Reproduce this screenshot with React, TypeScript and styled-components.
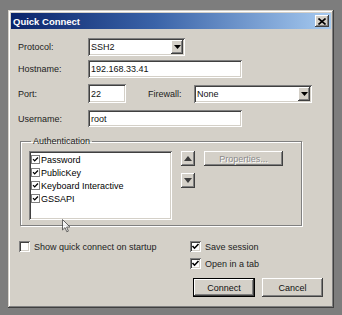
import React from "react";
import styled, { createGlobalStyle } from "styled-components";

const GlobalStyle = createGlobalStyle`
  html, body {
    margin: 0;
    padding: 0;
    background: #7d7d7d;
  }

  body {
    font-family: "Liberation Sans", Arial, sans-serif;
    font-size: 9px;
    color: #000;
  }
`;

const raised = `
  background: #d4d0c8;
  box-shadow: inset -1px -1px #404040, inset 1px 1px #fff, inset -2px -2px #808080;
`;

const sunken = `
  background: #fff;
  box-shadow: inset 1px 1px #808080, inset -1px -1px #fff, inset 2px 2px #404040, inset -2px -2px #d4d0c8;
`;

const CheckMark = ({ size = 11 }: { size?: number }) => (
  <svg width={size} height={size} viewBox="0 0 11 11">
    <polyline points="2.5,5 4.5,7.2 8.5,3" fill="none" stroke="#000" strokeWidth="1.6" />
  </svg>
);

const Triangle = ({ up }: { up?: boolean }) => (
  <svg width="8" height="5" viewBox="0 0 8 5">
    <polygon points={up ? "0,5 8,5 4,0" : "0,0 8,0 4,5"} fill="#3c3c3c" />
  </svg>
);

function Select({ value, width }: { value: string; width: number }) {
  return (
    <SelectBox $w={width}>
      <FieldText>{value}</FieldText>
      <DropButton>
        <svg width="7" height="4" viewBox="0 0 7 4">
          <polygon points="0,0 7,0 3.5,4" fill="#000" />
        </svg>
      </DropButton>
    </SelectBox>
  );
}

function Check({ label, checked }: { label: string; checked?: boolean }) {
  return (
    <CheckRow>
      <CheckBox>{checked ? <CheckMark /> : null}</CheckBox>
      <span>{label}</span>
    </CheckRow>
  );
}

const authMethods = ["Password", "PublicKey", "Keyboard Interactive", "GSSAPI"];

export default function App() {
  return (
    <>
      <GlobalStyle />
      <Window>
        <TitleBar>
          <span>Quick Connect</span>
          <CloseButton>
            <svg width="8" height="7" viewBox="0 0 8 7">
              <path d="M0.5 0.5 L7.5 6.5 M7.5 0.5 L0.5 6.5" stroke="#000" strokeWidth="1.6" />
            </svg>
          </CloseButton>
        </TitleBar>

        <Body>
          <FieldRow $mt={9}>
            <Label>Protocol:</Label>
            <Select value="SSH2" width={97} />
          </FieldRow>

          <FieldRow $mt={4}>
            <Label>Hostname:</Label>
            <TextField $w={154}>
              <FieldText>192.168.33.41</FieldText>
            </TextField>
          </FieldRow>

          <FieldRow $mt={6} $h={19}>
            <Label>Port:</Label>
            <TextField $w={38}>
              <FieldText>22</FieldText>
            </TextField>
            <Label $w={46} $ml={22}>
              Firewall:
            </Label>
            <Select value="None" width={118} />
          </FieldRow>

          <FieldRow $mt={7} $h={17}>
            <Label>Username:</Label>
            <TextField $w={154}>
              <FieldText>root</FieldText>
            </TextField>
          </FieldRow>

          <Group>
            <Legend>Authentication</Legend>
            <GroupInner>
              <ListBox>
                {authMethods.map(m => (
                  <ListItem key={m}>
                    <SmallCheck>
                      <CheckMark size={9} />
                    </SmallCheck>
                    <span>{m}</span>
                  </ListItem>
                ))}
              </ListBox>
              <ArrowColumn>
                <ArrowButton>
                  <Triangle up />
                </ArrowButton>
                <ArrowButton>
                  <Triangle />
                </ArrowButton>
              </ArrowColumn>
              <PropertiesButton>Properties...</PropertiesButton>
            </GroupInner>
          </Group>

          <Bottom>
            <LeftOptions>
              <Check label="Show quick connect on startup" />
            </LeftOptions>
            <RightOptions>
              <Check label="Save session" checked />
              <Check label="Open in a tab" checked />
              <ButtonRow>
                <DefaultButton>Connect</DefaultButton>
                <Button>Cancel</Button>
              </ButtonRow>
            </RightOptions>
          </Bottom>
        </Body>

        <Cursor>
          <svg width="9" height="14" viewBox="0 0 9 14">
            <path
              d="M0.5 0.5 L0.5 11 L3 8.6 L4.8 12.8 L6.4 12.1 L4.6 8 L8 8 Z"
              fill="#fff"
              stroke="#4a4a4a"
              strokeWidth="1"
            />
          </svg>
        </Cursor>
      </Window>
    </>
  );
}

const Window = styled.div`
  position: relative;
  box-sizing: border-box;
  margin: 10px 0 0 8px;
  width: 326px;
  height: 298px;
  padding: 3px;
  display: flex;
  flex-direction: column;
  background: #d4d0c8;
  box-shadow: inset -1px -1px #404040, inset 1px 1px #d4d0c8, inset -2px -2px #808080,
    inset 2px 2px #fff;
`;

const TitleBar = styled.div`
  height: 16px;
  display: flex;
  align-items: center;
  justify-content: space-between;
  padding-left: 2px;
  background: linear-gradient(to right, #0a246a 0%, #3a63a8 45%, #a6caf0 100%);
  color: #fff;
  font-weight: bold;
  font-size: 9.5px;
`;

const CloseButton = styled.div`
  ${raised}
  box-sizing: border-box;
  width: 14px;
  height: 12px;
  margin-right: 2px;
  display: flex;
  align-items: center;
  justify-content: center;
`;

const Body = styled.div`
  display: flex;
  flex-direction: column;
  padding: 0 8px 0 7px;
`;

const FieldRow = styled.div<{ $mt: number; $h?: number }>`
  display: flex;
  align-items: center;
  height: ${p => p.$h ?? 18}px;
  margin-top: ${p => p.$mt}px;
`;

const Label = styled.div<{ $w?: number; $ml?: number }>`
  width: ${p => p.$w ?? 70}px;
  margin-left: ${p => p.$ml ?? 0}px;
  flex-shrink: 0;
  color: #222;
`;

const TextField = styled.div<{ $w: number }>`
  ${sunken}
  box-sizing: border-box;
  width: ${p => p.$w}px;
  height: 100%;
  display: flex;
  align-items: center;
  padding-left: 3px;
`;

const SelectBox = styled.div<{ $w: number }>`
  ${sunken}
  box-sizing: border-box;
  width: ${p => p.$w}px;
  height: 18px;
  display: flex;
  align-items: center;
  justify-content: space-between;
  padding: 2px 2px 2px 3px;
`;

const FieldText = styled.span`
  color: #111;
  white-space: nowrap;
`;

const DropButton = styled.div`
  ${raised}
  box-sizing: border-box;
  width: 12px;
  height: 14px;
  display: flex;
  align-items: center;
  justify-content: center;
`;

const Group = styled.fieldset`
  box-sizing: border-box;
  margin: 9px 0 0 2px;
  width: 282px;
  min-width: 0;
  padding: 5px 8px 5px 8px;
  border: 1px solid #808080;
  box-shadow: inset 1px 1px #fff, 1px 1px #fff;
`;

const Legend = styled.legend`
  padding: 0 2px;
  margin-left: 2px;
  line-height: 10px;
  font-size: 9px;
  color: #222;
`;

const GroupInner = styled.div`
  display: flex;
  align-items: flex-start;
  gap: 9px;
`;

const ListBox = styled.div`
  ${sunken}
  box-sizing: border-box;
  width: 143px;
  height: 69px;
  padding: 2px 2px;
  display: flex;
  flex-direction: column;
`;

const ListItem = styled.div`
  height: 13px;
  display: flex;
  align-items: center;
  gap: 1px;
`;

const SmallCheck = styled.div`
  box-sizing: border-box;
  width: 9px;
  height: 9px;
  border: 1px solid #808080;
  background: #fff;
  display: flex;
  align-items: center;
  justify-content: center;
  overflow: hidden;

  svg {
    flex-shrink: 0;
  }
`;

const ArrowColumn = styled.div`
  display: flex;
  flex-direction: column;
  gap: 7px;
`;

const ArrowButton = styled.div`
  ${raised}
  box-sizing: border-box;
  width: 14px;
  height: 15px;
  display: flex;
  align-items: center;
  justify-content: center;
`;

const PropertiesButton = styled.div`
  ${raised}
  box-sizing: border-box;
  width: 79px;
  height: 15px;
  display: flex;
  align-items: center;
  justify-content: center;
  color: #8a8a8a;
  text-shadow: 1px 1px #fff;
`;

const Bottom = styled.div`
  display: grid;
  grid-template-columns: 172px 1fr;
  margin-top: 15px;
`;

const LeftOptions = styled.div`
  padding-left: 1px;
`;

const RightOptions = styled.div`
  display: flex;
  flex-direction: column;
  gap: 6px;
`;

const CheckRow = styled.div`
  display: flex;
  align-items: center;
  gap: 4px;
  height: 11px;
  color: #222;
  white-space: nowrap;
`;

const CheckBox = styled.div`
  ${sunken}
  box-sizing: border-box;
  width: 11px;
  height: 11px;
  flex-shrink: 0;
  display: flex;
  align-items: center;
  justify-content: center;
`;

const ButtonRow = styled.div`
  display: flex;
  justify-content: flex-end;
  gap: 7px;
  margin-top: 3px;
`;

const Button = styled.div`
  ${raised}
  box-sizing: border-box;
  width: 61px;
  height: 19px;
  display: flex;
  align-items: center;
  justify-content: center;
  color: #111;
`;

const DefaultButton = styled(Button)`
  width: 62px;
  border: 1px solid #000;
`;

const Cursor = styled.div`
  position: absolute;
  left: 54px;
  top: 209px;
  opacity: 0.8;
  line-height: 0;
`;
